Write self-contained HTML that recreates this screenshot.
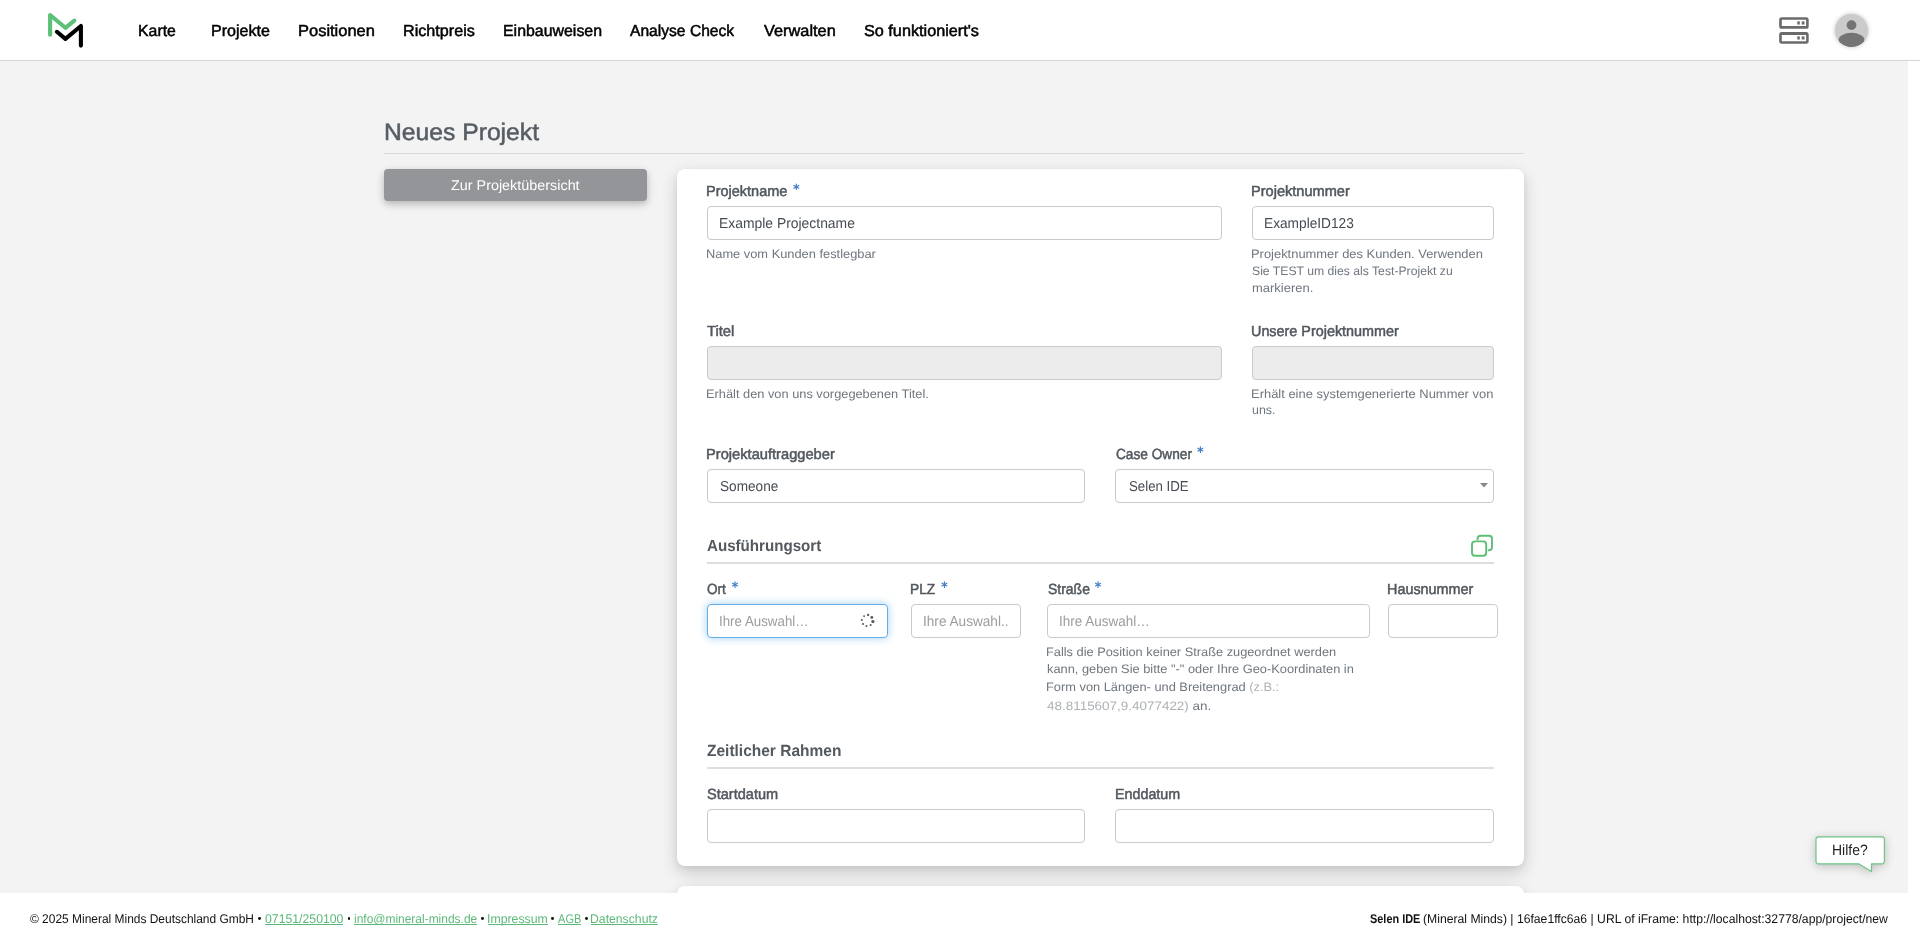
<!DOCTYPE html>
<html><head><meta charset="utf-8">
<style>
*{margin:0;padding:0;box-sizing:border-box}
html,body{width:1920px;height:943px;overflow:hidden;background:#fff;font-family:'Liberation Sans',sans-serif}
.a{position:absolute}
.t{position:absolute;white-space:nowrap;line-height:1;text-rendering:geometricPrecision;transform-origin:0 0;font-family:'Liberation Sans',sans-serif}
#hdr{left:0;top:0;width:1920px;height:61px;background:#fff;border-bottom:1px solid #d6d6d6}
#main{left:0;top:61px;width:1908px;height:832px;background:#f3f3f3}
#footer{left:0;top:893px;width:1920px;height:50px;background:#fff}
.card{background:#fff;border-radius:8px;box-shadow:0 6px 16px rgba(0,0,0,.18),0 2px 5px rgba(0,0,0,.05)}
.inp{position:absolute;background:#fff;border:1px solid #cacaca;border-radius:4px;height:34px}
.dis{background:#ececec}
.ast{position:absolute;color:#3d7fcb;font-size:15px;line-height:1;font-weight:bold}
.sline{position:absolute;height:2px;background:#dedede}
.ul{position:absolute;height:1px;background:#5cb97a}
</style></head>
<body>
<div id="hdr" class="a"></div>
<!-- logo -->
<svg class="a" style="left:0;top:0" width="100" height="60" viewBox="0 0 100 60">
 <polyline points="50.1,34.8 50.1,15 65.4,27.8 74.3,20.6" fill="none" stroke="#5cc07b" stroke-width="4.1" stroke-linecap="round" stroke-linejoin="round"/>
 <polyline points="56.9,31.8 65.4,38.9 80.9,26.0 80.9,45.6" fill="none" stroke="#000" stroke-width="4.1" stroke-linecap="round" stroke-linejoin="round"/>
</svg>
<!-- server icon -->
<svg class="a" style="left:1770px;top:10px" width="50" height="40" viewBox="0 0 50 40">
 <path fill-rule="evenodd" fill="#6b6b6b" d="M9.15,9.75 a2.6,2.6 0 0 1 2.6,-2.6 H36.1 a2.6,2.6 0 0 1 2.6,2.6 V16.2 a2.6,2.6 0 0 1 -2.6,2.6 H11.75 a2.6,2.6 0 0 1 -2.6,-2.6 ZM11.8,9.8 H36.1 V16.1 H11.8 ZM9.15,24.6 a2.6,2.6 0 0 1 2.6,-2.6 H36.1 a2.6,2.6 0 0 1 2.6,2.6 V31.1 a2.6,2.6 0 0 1 -2.6,2.6 H11.75 a2.6,2.6 0 0 1 -2.6,-2.6 ZM11.8,24.9 H36.1 V31.2 H11.8 Z"/>
 <rect x="27.3" y="11.35" width="2.5" height="3.2" fill="#6b6b6b"/><rect x="31.7" y="11.35" width="2.8" height="3.2" fill="#6b6b6b"/>
 <rect x="27.3" y="26.35" width="2.5" height="3.2" fill="#6b6b6b"/><rect x="31.7" y="26.35" width="2.8" height="3.2" fill="#6b6b6b"/>
</svg>
<!-- avatar -->
<div class="a" style="left:1835.2px;top:13.7px;width:33px;height:33px;border-radius:50%;box-shadow:0 0 4px rgba(0,0,0,.25);overflow:hidden;background:#cbcbcb">
 <svg width="33" height="33" viewBox="0 0 33 33" style="display:block">
  <circle cx="16.5" cy="11.1" r="4.9" fill="#747474"/>
  <ellipse cx="16.5" cy="26" rx="12.9" ry="7.2" fill="#747474"/>
 </svg>
</div>

<div id="main" class="a"></div>
<div class="a" style="left:384px;top:153px;width:1140px;height:1px;background:#d9d9d9"></div>
<div class="a" style="left:384px;top:169px;width:263px;height:32px;background:#939599;border-radius:4px;box-shadow:0 3px 6px rgba(0,0,0,.17),0 3px 12px rgba(0,0,0,.10)"></div>

<div class="a card" style="left:677px;top:169px;width:847px;height:697px"></div>
<div class="a card" style="left:677px;top:886px;width:847px;height:200px"></div>

<!-- inputs -->
<div class="inp" style="left:707px;top:206px;width:515px"></div>
<div class="inp" style="left:1252px;top:206px;width:242px"></div>
<div class="inp dis" style="left:707px;top:346px;width:515px"></div>
<div class="inp dis" style="left:1252px;top:346px;width:242px"></div>
<div class="inp" style="left:707px;top:469px;width:378px"></div>
<div class="inp" style="left:1115px;top:469px;width:379px"></div>
<svg class="a" style="left:1478px;top:481px" width="12" height="9"><polygon points="2,2 10,2 6,6.6" fill="#888"/></svg>

<div class="sline" style="left:707px;top:562px;width:787px"></div>
<!-- copy icon -->
<svg class="a" style="left:1465px;top:530px" width="32" height="32" viewBox="0 0 32 32">
 <path d="M12.6,9.4 V8.8 a3,3 0 0 1 3,-3 h8.4 a3,3 0 0 1 3,3 v8.4 a3,3 0 0 1 -3,3 h-0.4" fill="none" stroke="#5cbf76" stroke-width="1.9" stroke-linecap="round"/>
 <rect x="7" y="11.4" width="14.2" height="14.4" rx="3" fill="none" stroke="#5cbf76" stroke-width="1.9"/>
</svg>

<div class="inp" style="left:707px;top:604px;width:181px;border-color:#66aee8;box-shadow:0 0 8px rgba(102,175,233,.6)"></div>
<svg class="a" style="left:859px;top:612px" width="18" height="18" viewBox="0 0 18 18">
 <g fill="#50575d">
  <circle cx="9.1" cy="3.0" r="1.15"/><circle cx="12.8" cy="5.4" r="1.4"/><circle cx="13.9" cy="9.5" r="1.6"/>
  <circle cx="11.6" cy="13.0" r="1.0"/><circle cx="7.5" cy="14.0" r="1.0"/><circle cx="4.0" cy="11.9" r="1.0"/>
  <circle cx="2.9" cy="7.9" r="1.0"/><circle cx="5.1" cy="4.1" r="0.95"/>
 </g>
</svg>
<div class="inp" style="left:911px;top:604px;width:110px"></div>
<div class="inp" style="left:1047px;top:604px;width:323px"></div>
<div class="inp" style="left:1388px;top:604px;width:110px"></div>

<div class="sline" style="left:707px;top:767px;width:787px"></div>
<div class="inp" style="left:707px;top:809px;width:378px"></div>
<div class="inp" style="left:1115px;top:809px;width:379px"></div>

<!-- hilfe -->
<svg class="a" style="left:1800px;top:820px;overflow:visible;filter:drop-shadow(0 2px 5px rgba(0,0,0,.22))" width="100" height="70" viewBox="0 0 100 70">
 <path d="M18.5,16.8 h63.4 a2.5,2.5 0 0 1 2.5,2.5 v22 a2.5,2.5 0 0 1 -2.5,2.5 h-10.4 v7.6 l-13,-7.6 h-40 a2.5,2.5 0 0 1 -2.5,-2.5 v-22 a2.5,2.5 0 0 1 2.5,-2.5 z" fill="#fff" stroke="#6cc486" stroke-width="1.2" stroke-linejoin="round"/>
</svg>

<div id="footer" class="a"></div>

<div class="t" style="left:137.75px;top:24px;font-size:15.9px;color:#000;font-weight:normal;transform:scaleX(0.9975);-webkit-text-stroke:0.5px currentColor;">Karte</div>
<div class="t" style="left:210.99px;top:24px;font-size:15.9px;color:#000;font-weight:normal;transform:scaleX(1.0095);-webkit-text-stroke:0.5px currentColor;">Projekte</div>
<div class="t" style="left:298.16px;top:24px;font-size:15.9px;color:#000;font-weight:normal;transform:scaleX(1.0363);-webkit-text-stroke:0.5px currentColor;">Positionen</div>
<div class="t" style="left:402.73px;top:24px;font-size:15.9px;color:#000;font-weight:normal;transform:scaleX(1.0165);-webkit-text-stroke:0.5px currentColor;">Richtpreis</div>
<div class="t" style="left:502.90px;top:24px;font-size:15.9px;color:#000;font-weight:normal;transform:scaleX(1.0010);-webkit-text-stroke:0.5px currentColor;">Einbauweisen</div>
<div class="t" style="left:630.40px;top:24px;font-size:15.9px;color:#000;font-weight:normal;transform:scaleX(0.9826);-webkit-text-stroke:0.5px currentColor;">Analyse Check</div>
<div class="t" style="left:763.50px;top:24px;font-size:15.9px;color:#000;font-weight:normal;transform:scaleX(1.0283);-webkit-text-stroke:0.5px currentColor;">Verwalten</div>
<div class="t" style="left:863.50px;top:24px;font-size:15.9px;color:#000;font-weight:normal;transform:scaleX(1.0212);-webkit-text-stroke:0.5px currentColor;">So funktioniert&#x27;s</div>
<div class="t" style="left:384.16px;top:121px;font-size:23.8px;color:#565c63;font-weight:normal;transform:scaleX(1.0373);-webkit-text-stroke:0.5px currentColor;">Neues Projekt</div>
<div class="t" style="left:450.90px;top:178px;font-size:14.1px;color:#ffffff;font-weight:normal;transform:scaleX(1.0199);">Zur Projektübersicht</div>
<div class="t" style="left:706.11px;top:185px;font-size:14.7px;color:#51575d;font-weight:normal;transform:scaleX(0.9867);-webkit-text-stroke:0.5px currentColor;">Projektname</div>
<div class="t" style="left:1251.11px;top:185px;font-size:14.7px;color:#51575d;font-weight:normal;transform:scaleX(0.9920);-webkit-text-stroke:0.5px currentColor;">Projektnummer</div>
<div class="t" style="left:707.40px;top:325px;font-size:14.7px;color:#51575d;font-weight:normal;transform:scaleX(1.0060);-webkit-text-stroke:0.5px currentColor;">Titel</div>
<div class="t" style="left:1251.02px;top:325px;font-size:14.7px;color:#51575d;font-weight:normal;transform:scaleX(0.9786);-webkit-text-stroke:0.5px currentColor;">Unsere Projektnummer</div>
<div class="t" style="left:706.00px;top:448px;font-size:14.7px;color:#51575d;font-weight:normal;transform:scaleX(0.9983);-webkit-text-stroke:0.5px currentColor;">Projektauftraggeber</div>
<div class="t" style="left:1115.70px;top:448px;font-size:14.7px;color:#51575d;font-weight:normal;transform:scaleX(0.9310);-webkit-text-stroke:0.5px currentColor;">Case Owner</div>
<div class="t" style="left:706.90px;top:583px;font-size:14.7px;color:#51575d;font-weight:normal;transform:scaleX(0.9205);-webkit-text-stroke:0.5px currentColor;">Ort</div>
<div class="t" style="left:910.36px;top:583px;font-size:14.7px;color:#51575d;font-weight:normal;transform:scaleX(0.9359);-webkit-text-stroke:0.5px currentColor;">PLZ</div>
<div class="t" style="left:1047.50px;top:583px;font-size:14.7px;color:#51575d;font-weight:normal;transform:scaleX(0.9508);-webkit-text-stroke:0.5px currentColor;">Straße</div>
<div class="t" style="left:1387.27px;top:583px;font-size:14.7px;color:#51575d;font-weight:normal;transform:scaleX(0.9798);-webkit-text-stroke:0.5px currentColor;">Hausnummer</div>
<div class="t" style="left:707.00px;top:788px;font-size:14.7px;color:#51575d;font-weight:normal;transform:scaleX(0.9916);-webkit-text-stroke:0.5px currentColor;">Startdatum</div>
<div class="t" style="left:1114.83px;top:788px;font-size:14.7px;color:#51575d;font-weight:normal;transform:scaleX(0.9738);-webkit-text-stroke:0.5px currentColor;">Enddatum</div>
<div class="t" style="left:706.80px;top:539px;font-size:16px;color:#53595f;font-weight:bold;transform:scaleX(0.9453);">Ausführungsort</div>
<div class="t" style="left:706.70px;top:743px;font-size:16.2px;color:#53595f;font-weight:bold;transform:scaleX(0.9574);">Zeitlicher Rahmen</div>
<div class="t" style="left:719.33px;top:217px;font-size:14.4px;color:#464c52;font-weight:normal;transform:scaleX(0.9652);">Example Projectname</div>
<div class="t" style="left:1264.15px;top:217px;font-size:14.4px;color:#464c52;font-weight:normal;transform:scaleX(0.9520);">ExampleID123</div>
<div class="t" style="left:719.80px;top:480px;font-size:14.4px;color:#464c52;font-weight:normal;transform:scaleX(0.9464);">Someone</div>
<div class="t" style="left:1128.75px;top:480px;font-size:14.4px;color:#464c52;font-weight:normal;transform:scaleX(0.9214);">Selen IDE</div>
<div class="t" style="left:719.07px;top:615px;font-size:14.4px;color:#9c9c9c;font-weight:normal;transform:scaleX(0.9255);">Ihre Auswahl…</div>
<div class="t" style="left:923.45px;top:615px;font-size:14.4px;color:#9c9c9c;font-weight:normal;transform:scaleX(0.9463);">Ihre Auswahl..</div>
<div class="t" style="left:1059.06px;top:615px;font-size:14.4px;color:#9c9c9c;font-weight:normal;transform:scaleX(0.9376);">Ihre Auswahl…</div>
<div class="t" style="left:706.06px;top:248px;font-size:12.3px;color:#6f767d;font-weight:normal;transform:scaleX(1.0440);">Name vom Kunden festlegbar</div>
<div class="t" style="left:1250.95px;top:248px;font-size:12.3px;color:#6f767d;font-weight:normal;transform:scaleX(1.0502);">Projektnummer des Kunden. Verwenden</div>
<div class="t" style="left:1252.00px;top:265px;font-size:12.3px;color:#6f767d;font-weight:normal;transform:scaleX(0.9920);">Sie TEST um dies als Test-Projekt zu</div>
<div class="t" style="left:1252.00px;top:282px;font-size:12.3px;color:#6f767d;font-weight:normal;transform:scaleX(1.0560);">markieren.</div>
<div class="t" style="left:705.96px;top:388px;font-size:12.3px;color:#6f767d;font-weight:normal;transform:scaleX(1.0414);">Erhält den von uns vorgegebenen Titel.</div>
<div class="t" style="left:1250.95px;top:388px;font-size:12.3px;color:#6f767d;font-weight:normal;transform:scaleX(1.0524);">Erhält eine systemgenerierte Nummer von</div>
<div class="t" style="left:1252.00px;top:404px;font-size:12.3px;color:#6f767d;font-weight:normal;transform:scaleX(1.0076);">uns.</div>
<div class="t" style="left:1046.16px;top:646px;font-size:12.3px;color:#6f767d;font-weight:normal;transform:scaleX(1.0405);">Falls die Position keiner Straße zugeordnet werden</div>
<div class="t" style="left:1047.20px;top:663px;font-size:12.3px;color:#6f767d;font-weight:normal;transform:scaleX(1.0420);">kann, geben Sie bitte &quot;-&quot; oder Ihre Geo-Koordinaten in</div>
<div class="t" style="left:1046.16px;top:681px;font-size:12.3px;color:#6f767d;font-weight:normal;transform:scaleX(1.0432);">Form von Längen- und Breitengrad <span style="color:#aeb2b5">(z.B.:</span></div>
<div class="t" style="left:1047.20px;top:700px;font-size:12.3px;color:#6f767d;font-weight:normal;transform:scaleX(1.0935);"><span style="color:#aeb2b5">48.8115607,9.4077422)</span> an.</div>
<div class="t" style="left:1832.07px;top:843px;font-size:15px;color:#222;font-weight:normal;transform:scaleX(0.9295);">Hilfe?</div>
<div class="t" style="left:30.00px;top:913px;font-size:12.6px;color:#111;font-weight:normal;transform:scaleX(0.9488);">© 2025 Mineral Minds Deutschland GmbH</div>
<div class="t" style="left:265.00px;top:913px;font-size:12.6px;color:#5cb97a;font-weight:normal;transform:scaleX(0.9734);">07151/250100</div>
<div class="t" style="left:354.30px;top:913px;font-size:12.6px;color:#5cb97a;font-weight:normal;transform:scaleX(0.9501);">info@mineral-minds.de</div>
<div class="t" style="left:487.22px;top:913px;font-size:12.6px;color:#5cb97a;font-weight:normal;transform:scaleX(0.9771);">Impressum</div>
<div class="t" style="left:558.00px;top:913px;font-size:12.6px;color:#5cb97a;font-weight:normal;transform:scaleX(0.8780);">AGB</div>
<div class="t" style="left:590.33px;top:913px;font-size:12.6px;color:#5cb97a;font-weight:normal;transform:scaleX(0.9708);">Datenschutz</div>
<div class="t" style="left:1369.50px;top:913px;font-size:12.6px;color:#111;font-weight:bold;transform:scaleX(0.8667);">Selen IDE</div>
<div class="t" style="left:1423.40px;top:913px;font-size:12.6px;color:#111;font-weight:normal;transform:scaleX(0.9676);">(Mineral Minds) | 16fae1ffc6a6 | URL of iFrame: http://localhost:32778/app/project/new</div>
<svg class="a" style="left:786px;top:176px" width="20" height="20" viewBox="0 0 20 20"><g stroke="#3f7cc6" stroke-width="1.15" stroke-linecap="round"><line x1="10.30" y1="13.60" x2="10.30" y2="8.00"/><line x1="7.88" y1="12.20" x2="12.72" y2="9.40"/><line x1="7.88" y1="9.40" x2="12.72" y2="12.20"/></g></svg>
<svg class="a" style="left:1190px;top:439px" width="20" height="20" viewBox="0 0 20 20"><g stroke="#3f7cc6" stroke-width="1.15" stroke-linecap="round"><line x1="10.35" y1="13.40" x2="10.35" y2="7.80"/><line x1="7.93" y1="12.00" x2="12.77" y2="9.20"/><line x1="7.93" y1="9.20" x2="12.77" y2="12.00"/></g></svg>
<svg class="a" style="left:725px;top:574px" width="20" height="20" viewBox="0 0 20 20"><g stroke="#3f7cc6" stroke-width="1.15" stroke-linecap="round"><line x1="10.00" y1="13.40" x2="10.00" y2="7.80"/><line x1="7.58" y1="12.00" x2="12.42" y2="9.20"/><line x1="7.58" y1="9.20" x2="12.42" y2="12.00"/></g></svg>
<svg class="a" style="left:934px;top:574px" width="20" height="20" viewBox="0 0 20 20"><g stroke="#3f7cc6" stroke-width="1.15" stroke-linecap="round"><line x1="10.45" y1="13.40" x2="10.45" y2="7.80"/><line x1="8.03" y1="12.00" x2="12.87" y2="9.20"/><line x1="8.03" y1="9.20" x2="12.87" y2="12.00"/></g></svg>
<svg class="a" style="left:1088px;top:574px" width="20" height="20" viewBox="0 0 20 20"><g stroke="#3f7cc6" stroke-width="1.15" stroke-linecap="round"><line x1="10.00" y1="13.40" x2="10.00" y2="7.80"/><line x1="7.58" y1="12.00" x2="12.42" y2="9.20"/><line x1="7.58" y1="9.20" x2="12.42" y2="12.00"/></g></svg>
<div class="a" style="left:258.15px;top:917.05px;width:2.9px;height:2.9px;border-radius:50%;background:#111"></div>
<div class="a" style="left:347.55px;top:917.05px;width:2.9px;height:2.9px;border-radius:50%;background:#111"></div>
<div class="a" style="left:480.85px;top:917.05px;width:2.9px;height:2.9px;border-radius:50%;background:#111"></div>
<div class="a" style="left:551.35px;top:917.05px;width:2.9px;height:2.9px;border-radius:50%;background:#111"></div>
<div class="a" style="left:584.85px;top:917.05px;width:2.9px;height:2.9px;border-radius:50%;background:#111"></div>
<div class="ul" style="left:265.0px;top:924px;width:78.4px"></div>
<div class="ul" style="left:354.3px;top:924px;width:123.2px"></div>
<div class="ul" style="left:488.2px;top:924px;width:59.4px"></div>
<div class="ul" style="left:558.0px;top:924px;width:23.0px"></div>
<div class="ul" style="left:591.3px;top:924px;width:66.7px"></div>
</body></html>
